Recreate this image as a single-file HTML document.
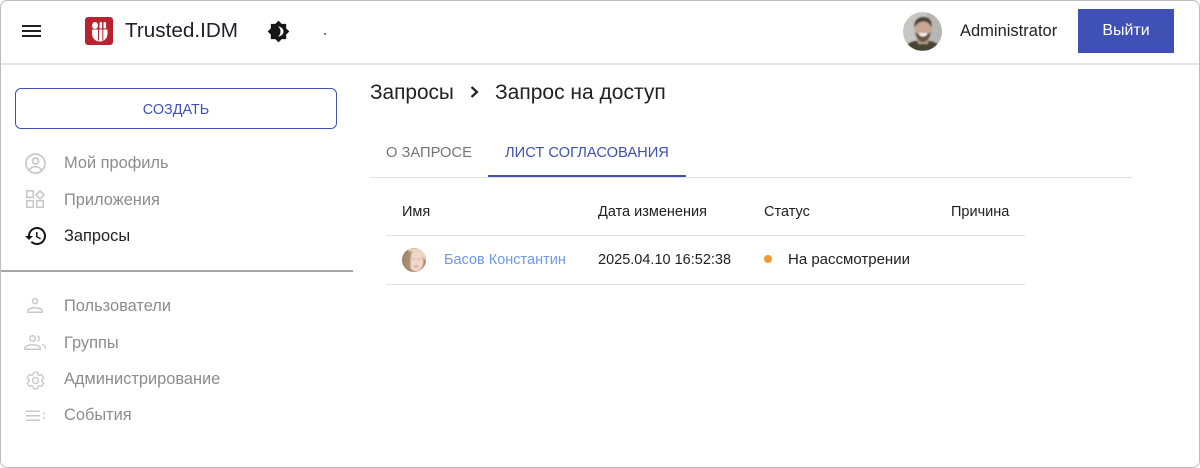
<!DOCTYPE html>
<html lang="ru"><head><meta charset="utf-8"><title>Trusted.IDM</title>
<style>
html,body{margin:0;padding:0;background:#fff}
body{width:1200px;height:468px;position:relative;overflow:hidden;font-family:"Liberation Sans",sans-serif;color:#212121}
.frame{position:absolute;left:0;top:0;width:1198px;height:466px;border:1px solid #bdbdbd;border-radius:7px;z-index:5;pointer-events:none}
.t{position:absolute;white-space:nowrap;line-height:20px}
.line{position:absolute;height:1px;background:#e0e0e0}
.nav{font-size:16.400px;color:#8c8c8c;left:64px}
.th{font-size:14.500px}
svg{position:absolute;overflow:visible}
</style></head><body>
<div class="frame"></div>

<div class="line" style="left:0;top:63px;width:1200px;height:2px;background:#e3e3e3"></div>

<svg style="left:22px;top:24px" width="19" height="14" viewBox="0 0 19 14"><path d="M0 2h19M0 7h19M0 12h19" stroke="#212121" stroke-width="2"/></svg>

<svg style="left:85px;top:17px" width="28" height="28" viewBox="0 0 28 28"><rect width="28" height="28" rx="3" fill="#b9232f"/><path d="M7 12.500h15.500v4c0 5-3.500 8-7.700 8S7 21.500 7 16.500z" fill="#fff"/><ellipse cx="10" cy="8.500" rx="3" ry="3.500" fill="#fff"/><rect x="14.500" y="5" width="2.600" height="6.500" rx="1.300" fill="#fff"/><rect x="18.500" y="5" width="2.600" height="6.500" rx="1.300" fill="#fff"/><path d="M13.500 12.500v11M17.800 12.500v11" stroke="#b9232f" stroke-width="1"/></svg>
<div class="t" style="left:125px;top:21px;font-size:20.700px;color:#1f1f2b">Trusted.IDM</div>

<svg style="left:267px;top:20px" width="23" height="23" viewBox="0 0 24 24"><path d="M20 8.690V4h-4.690L12 .690 8.690 4H4v4.690L.690 12 4 15.310V20h4.690L12 23.310 15.310 20H20v-4.690L23.310 12z" fill="#161616"/><path d="M11.500 6.800c3 0 5.700 2.300 5.700 5.200s-2.700 5.200-5.700 5.200c1.700-1.200 2.600-3 2.600-5.200s-.900-4-2.600-5.200z" fill="#fff"/></svg>
<div style="position:absolute;left:324px;top:33px;width:2px;height:2px;background:#555;border-radius:50%"></div>

<svg style="left:903px;top:12px" width="39" height="39" viewBox="0 0 39 39"><defs><clipPath id="a"><circle cx="19.500" cy="19.500" r="19.500"/></clipPath><filter id="f1" x="-20%" y="-20%" width="140%" height="140%"><feGaussianBlur stdDeviation="0.700"/></filter></defs><g clip-path="url(#a)"><rect width="39" height="39" fill="#c6c7c5"/><rect x="24" width="15" height="39" fill="#b6b6b4"/><g filter="url(#f1)"><path d="M1 39c1-7 8-10 12-10h12c6 0 12 3 13 10z" fill="#4a4434"/><rect x="15" y="24" width="10" height="8" fill="#b59a85"/><ellipse cx="20" cy="17" rx="8" ry="10" fill="#c9a690"/><path d="M11.500 16c-1-8 4-11 9-11s9 3 8 11c-1.500-4-4-6.500-8-6.500s-7.500 2.500-9 6.500z" fill="#4e453c"/><path d="M12 19c1 8 4.500 11 8 11s7-3 8-11c-1 3-3.500 3-8 3s-7 0-8-3z" fill="#6a5646"/><path d="M15.500 21h9c-.5 2.500-2.500 3.500-4.500 3.500s-4-1-4.500-3.500z" fill="#f1efeb"/></g></g></svg>
<div class="t" style="left:960px;top:21px;font-size:16.500px;color:#212121">Administrator</div>
<div class="t" style="left:1078px;top:9px;width:96px;height:44px;line-height:44px;background:#3f51b5;color:#fff;font-size:16px;text-align:center">Выйти</div>

<div class="t" style="left:15px;top:88px;width:320px;height:39px;line-height:43px;border:1px solid #3f51b5;border-radius:6px;text-align:center;font-size:14.400px;color:#3f51b5">СОЗДАТЬ</div>

<svg style="left:25px;top:153px" width="21" height="21" viewBox="0 0 21 21"><circle cx="10.500" cy="10.500" r="9.500" fill="none" stroke="#c8c8c8" stroke-width="1.700"/><circle cx="10.500" cy="8" r="3" fill="none" stroke="#c8c8c8" stroke-width="1.700"/><path d="M4.500 17c1.300-2.300 3.500-3.300 6-3.300s4.700 1 6 3.300" fill="none" stroke="#c8c8c8" stroke-width="1.700"/></svg>
<div class="t nav" style="top:153px">Мой профиль</div>

<svg style="left:26px;top:190px" width="19" height="18" viewBox="0 0 19 18"><g fill="none" stroke="#c8c8c8" stroke-width="1.600"><rect x=".800" y=".800" width="6.500" height="6.500"/><path d="M14 .900l4 4-4 4-4-4z"/><rect x=".800" y="10.700" width="6.500" height="6.500"/><rect x="10.700" y="10.700" width="6.500" height="6.500"/></g></svg>
<div class="t nav" style="top:190px">Приложения</div>

<svg style="left:24px;top:224px" width="24" height="24" viewBox="0 0 24 24"><path d="M13 3c-4.970 0-9 4.030-9 9H1l3.890 3.890.070.140L9 12H6c0-3.870 3.130-7 7-7s7 3.130 7 7-3.130 7-7 7c-1.930 0-3.680-.790-4.940-2.060l-1.420 1.420C8.270 19.990 10.510 21 13 21c4.970 0 9-4.030 9-9s-4.030-9-9-9zm-1 5v5l4.280 2.540.720-1.210-3.500-2.080V8H12z" fill="#161616"/></svg>
<div class="t nav" style="top:226px;color:#212121">Запросы</div>

<div class="line" style="left:0;top:270px;width:353px;height:2px;background:#a6a6a6"></div>

<svg style="left:27px;top:298px" width="16" height="15" viewBox="0 0 16 15"><g fill="none" stroke="#c8c8c8" stroke-width="1.500"><circle cx="8" cy="3.200" r="2.500"/><path d="M.800 14.200v-1.400c0-1.800 3.200-3 7.200-3s7.200 1.200 7.200 3v1.400z"/></g></svg>
<div class="t nav" style="top:296px">Пользователи</div>

<svg style="left:24px;top:335px" width="23" height="15" viewBox="0 0 23 15"><g fill="none" stroke="#c8c8c8" stroke-width="1.500"><circle cx="8.500" cy="3.500" r="2.800"/><path d="M.800 14.200v-1.200c0-2 3.500-3.200 7.700-3.200s7.700 1.200 7.700 3.200v1.200z"/><path d="M13.500 .700c2 .800 2 4.700 0 5.600"/><path d="M18 9.300c2 .700 3.500 2 3.500 4.900" stroke-width="1.300"/></g></svg>
<div class="t nav" style="top:333px">Группы</div>

<svg style="left:25px;top:370px" width="21" height="21" viewBox="0 0 24 24"><path d="M19.140 12.940c.040-.300.060-.610.060-.940 0-.320-.020-.640-.070-.940l2.030-1.580c.180-.140.230-.410.120-.610l-1.920-3.320c-.120-.220-.370-.290-.590-.220l-2.390.960c-.500-.380-1.030-.700-1.620-.940l-.360-2.540c-.040-.240-.240-.410-.480-.410h-3.840c-.240 0-.430.170-.470.410l-.360 2.540c-.590.240-1.130.570-1.620.940l-2.390-.960c-.220-.080-.470 0-.590.220L2.740 8.870c-.120.210-.080.470.120.610l2.030 1.580c-.050.300-.090.630-.090.940s.020.640.070.940l-2.030 1.580c-.180.140-.230.410-.120.610l1.920 3.320c.120.220.370.290.590.220l2.390-.960c.500.380 1.030.700 1.620.940l.360 2.540c.050.240.240.410.480.410h3.840c.240 0 .440-.170.470-.410l.360-2.540c.590-.240 1.130-.560 1.620-.940l2.390.960c.220.080.470 0 .590-.220l1.920-3.320c.120-.220.070-.470-.120-.610l-2.010-1.580z" fill="none" stroke="#c8c8c8" stroke-width="1.500"/><circle cx="12" cy="12" r="3.400" fill="none" stroke="#c8c8c8" stroke-width="1.500"/></svg>
<div class="t nav" style="top:369px">Администрирование</div>

<svg style="left:26px;top:410px" width="19" height="12" viewBox="0 0 19 12"><path d="M0 1.200h14M0 5.700h14M0 10.200h14" stroke="#c8c8c8" stroke-width="1.500"/><path d="M17 3.400h2M17 8h2" stroke="#c8c8c8" stroke-width="1.500"/></svg>
<div class="t nav" style="top:405px">События</div>

<div class="t" style="left:370px;top:83px;font-size:20.800px;color:#212121">Запросы</div>
<svg style="left:469px;top:85px" width="12" height="14" viewBox="0 0 12 14"><path d="M2.500 2l5.500 5-5.500 5" fill="none" stroke="#212121" stroke-width="2.200"/></svg>
<div class="t" style="left:495px;top:83px;font-size:21px;color:#212121">Запрос на доступ</div>

<div class="t" style="left:386px;top:143px;font-size:14.700px;color:#757575">О ЗАПРОСЕ</div>
<div class="t" style="left:505px;top:143px;font-size:14.700px;color:#3f51b5">ЛИСТ СОГЛАСОВАНИЯ</div>
<div class="line" style="left:370px;top:177px;width:762px;background:#e0e0e0"></div>
<div class="line" style="left:488px;top:175px;width:198px;height:2px;background:#3f51b5"></div>

<div class="t th" style="left:402px;top:202px">Имя</div>
<div class="t th" style="left:598px;top:202px">Дата изменения</div>
<div class="t th" style="left:764px;top:202px">Статус</div>
<div class="t th" style="left:951px;top:202px">Причина</div>
<div class="line" style="left:386px;top:235px;width:639px"></div>

<svg style="left:402px;top:248px" width="24" height="24" viewBox="0 0 24 24"><defs><clipPath id="b"><circle cx="12" cy="12" r="12"/></clipPath><filter id="f2" x="-20%" y="-20%" width="140%" height="140%"><feGaussianBlur stdDeviation="0.800"/></filter></defs><g clip-path="url(#b)"><rect width="24" height="24" fill="#9c8068"/><g filter="url(#f2)"><path d="M5 0h19v14l-3-5c-5 0-10-3-13-3z" fill="#e8d6bb"/><ellipse cx="14" cy="14" rx="7.500" ry="9.500" fill="#f2d8cc"/><path d="M3 8c1-3 4-5 7-5 -1 4-2 9-1 20H4C2 17 2 12 3 8z" fill="#a98d70"/><ellipse cx="14" cy="18.500" rx="2.500" ry="1" fill="#d39c98"/><path d="M10.500 11h2.500M16 11h2.500" stroke="#a08a7c" stroke-width="1"/></g></g></svg>
<div class="t th" style="left:444px;top:250px;color:#6f9ae8">Басов Константин</div>
<div class="t th" style="left:598px;top:250px">2025.04.10 16:52:38</div>
<div style="position:absolute;left:764px;top:255px;width:8px;height:8px;border-radius:50%;background:#f29a2e"></div>
<div class="t" style="left:788px;top:250px;font-size:15px">На рассмотрении</div>
<div class="line" style="left:386px;top:284px;width:639px"></div>
</body></html>
